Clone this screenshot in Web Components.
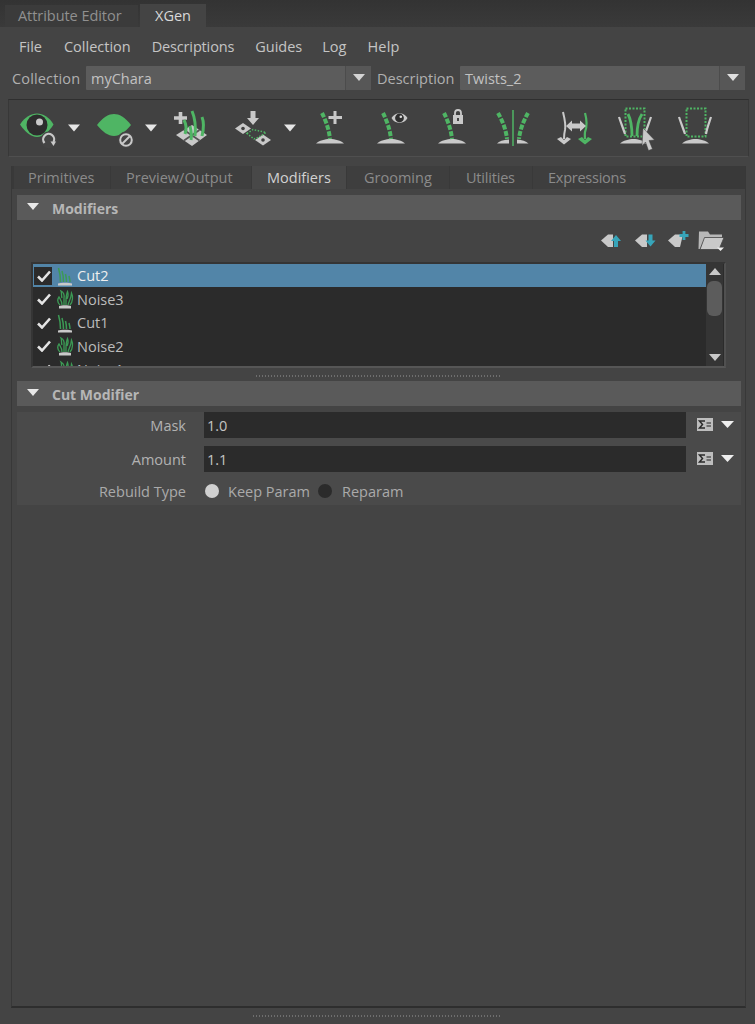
<!DOCTYPE html>
<html><head><meta charset="utf-8"><title>XGen</title>
<style>
html,body{margin:0;padding:0;background:#444;}
body{font-family:"Open Sans","Noto Sans",sans-serif;font-size:14.5px;color:#bdbdbd;}
</style></head>
<body>
<xg-app>
  <xg-topbar></xg-topbar>
  <xg-menubar></xg-menubar>
  <xg-selectors></xg-selectors>
  <xg-toolbar></xg-toolbar>
  <xg-panel>
    <xg-section title="Modifiers">
      <xg-list-tools></xg-list-tools>
      <xg-list></xg-list>
      <xg-splitter width="244" h="13" offset="239"></xg-splitter>
    </xg-section>
    <xg-section title="Cut Modifier" shade>
      <xg-field label="Mask" value="1.0" top="6"></xg-field>
      <xg-field label="Amount" value="1.1" top="8"></xg-field>
      <xg-radio-row></xg-radio-row>
    </xg-section>
  </xg-panel>
  <xg-splitter width="248" h="16" offset="253" tall></xg-splitter>
</xg-app>
<script>
const G='#4fb564', L='#c9c9c9', W='#e6e6e6', T='#37a5ba';
const dome=(a,b)=>`<path d="M${a} 143.500C${a+3} 140.500 ${a+9} 139 ${(a+b)/2} 139S${b-3} 140.500 ${b} 143.500Z" fill="${L}"/>`;
const stem=d=>`<path d="${d}" fill="none" stroke="${G}" stroke-width="4" stroke-dasharray="5 1.500"/>`;
const tri=(a,b)=>`<path d="M${a} 124.500H${b}L${(a+b)/2} 131.500Z" fill="${W}"/>`;
const tile=(x,y)=>`<path d="M${x-8} ${y}L${x} ${y-5.500}L${x+8} ${y}L${x} ${y+5.500}Z" fill="${L}"/><circle cx="${x}" cy="${y}" r="1.800" fill="#3f3f3f"/>`;
const foot=(x,c)=>`<path d="M${x-7} 139L${x-3} 137L${x} 140L${x+3} 137L${x+7} 139L${x} 144.500Z" fill="${c}"/>`;
const TOOL=[
 [9,53,`<path d="M20 124.500C25 117 31 113.500 37 113.500S49 117 53.500 124.500C49 132 43 137 37 137S25 132 20 124.500Z" fill="${G}"/><circle cx="37" cy="125" r="10.500" fill="#2d2d2d"/><circle cx="39.500" cy="122" r="3.500" fill="#c8c8c8"/><circle cx="49" cy="140" r="8.500" fill="#444"/><path d="M44.500 143A5.500 5.500 0 1 1 53.500 142" fill="none" stroke="${L}" stroke-width="2.200"/><path d="M50.500 141.500H56L53.500 146Z" fill="${L}"/>`],
 [62,28,tri(68,80)],
 [90,50,`<path d="M97 125C103 117 109 114 114 114S125 117 131 125C125 132 120 136 114 136S103 132 97 125Z" fill="${G}"/><circle cx="126" cy="140" r="8.500" fill="#444"/><circle cx="126" cy="140" r="5.800" fill="none" stroke="${L}" stroke-width="2"/><path d="M122 144L130 136" stroke="${L}" stroke-width="2"/>`],
 [140,25,tri(145,157)],
 [165,60,`<path d="M180.500 112V124M174 118H187" stroke="${L}" stroke-width="3.600"/><path d="M176 135L192 125L207 135L192 146Z" fill="${L}"/><path d="M184 130L199.500 140.500M199.500 130L184 140.500" stroke="#555" stroke-width="1.800"/><g fill="none" stroke="${G}" stroke-width="3"><path d="M192 111C195 118 196 126 195 136"/><path d="M202 117C204 122 204 128 202 136"/><path d="M184 120C186 124 187 129 185 134"/><path d="M190 126C191 130 192 134 191 140"/></g>`],
 [225,53,`<path d="M250.500 111H255.500V118H259L253 125L247 118H250.500Z" fill="${L}"/>${tile(243,128.500)}${tile(263,140)}<path d="M247 133.500L253 129.500L266 132.500L258 137.500L254 139Z" fill="none" stroke="${G}" stroke-width="1.500" stroke-dasharray="1.500 1.500"/>`],
 [278,27,tri(284,296)],
 [305,60,dome(316,344)+stem('M322 113C325.500 120 329 129 330 139')+`<path d="M335 111V124M328.500 117.500H342" stroke="${L}" stroke-width="3"/>`],
 [365,60,dome(377,405)+stem('M383 113C386.500 120 390 129 391 139')+`<path d="M391.500 118C395 111.500 404 111.500 407.500 118C404 124.500 395 124.500 391.500 118Z" fill="${L}"/><circle cx="399.500" cy="118" r="4.400" fill="#2f2f2f"/><circle cx="400.800" cy="116.800" r="1.300" fill="#ddd"/>`],
 [425,60,dome(438,466)+stem('M444 113C447.500 120 451 129 452 139')+`<path d="M455 115V113A3 3 0 0 1 461 113V115" fill="none" stroke="${L}" stroke-width="1.800"/><rect x="453" y="115" width="10" height="9" fill="${L}"/><rect x="457" y="118" width="2" height="3" fill="#444"/>`],
 [485,60,`<path d="M513 110V146" stroke="${G}" stroke-width="1.500"/><path d="M497 143.500C499 141 503 140 509 139.500V143.500Z" fill="${L}"/><path d="M517 143.500V139.500C522 140 526 141 528.500 143.500Z" fill="${L}"/>`+stem('M498 113C502 120 506 129 507 139')+stem('M528 113C524 120 520 129 519 139')],
 [545,60,`<path d="M563 112C565 120 566 125 565 130C564 134 564 136 564 139" fill="none" stroke="${L}" stroke-width="2"/>${foot(564,L)}<path d="M585 113C587 120 587 127 585 132C584.500 135 585 137 585 139" fill="none" stroke="${G}" stroke-width="2.200"/>${foot(585,G)}<path d="M566 126L572 120.500V123.500H580V120.500L586 126L580 131.500V128.500H572V131.500Z" fill="${L}"/>`],
 [605,63,`<rect x="625.500" y="108.500" width="19" height="28" fill="none" stroke="${G}" stroke-width="2" stroke-dasharray="2 1.500"/><path d="M619 117C621 123 623 128 625 134M651 117C649 123 647 128 645 134" fill="none" stroke="${L}" stroke-width="2.200"/><path d="M628 114C631 120 632 127 632 136M642 114C638 120 637 127 637 136" fill="none" stroke="${G}" stroke-width="2.800"/>${dome(620,647)}<path d="M643 128L654.500 140L649 140.500L652.500 149L648.500 150.500L645.500 142L642 146Z" fill="${L}" stroke="#3c3c3c" stroke-width=".5"/>`],
 [668,62,`<rect x="686.500" y="108.500" width="19" height="28" fill="none" stroke="${G}" stroke-width="2" stroke-dasharray="2 1.500"/><path d="M679 117C681 123 683 128 685 134M711 117C709 123 707 128 706 134" fill="none" stroke="${L}" stroke-width="2.200"/>${dome(682,709)}`]
];
function def(name,css,html){
  customElements.define(name,class extends HTMLElement{
    constructor(){super();const r=this.attachShadow({mode:'open'});
      r.innerHTML=`<style>${css}</style>`+(typeof html==='function'?html(this):html);}
  });
}
def('xg-app',`:host{display:flex;flex-direction:column;width:755px;height:1024px;background:#444;overflow:hidden}`,`<slot></slot>`);
def('xg-topbar',`:host{display:flex;height:27px;background:linear-gradient(#333,#3a3a3a);align-items:flex-end;padding-left:5px;box-sizing:border-box}
 .t{height:22px;display:flex;align-items:center;box-sizing:border-box}
 .a{width:133px;background:#3b3b3b;color:#909090;margin-right:2px;padding-left:13px;letter-spacing:-.05px}
 .b{width:66px;height:23px;background:#444;color:#d8d8d8;justify-content:center}`,
 `<div class="t a">Attribute Editor</div><div class="t b">XGen</div>`);
def('xg-menubar',`:host{display:flex;height:39px;align-items:center;padding:1px 0 0 19px;box-sizing:border-box;color:#c4c4c4}`,
 `<span>File</span><span style="margin-left:22px">Collection</span><span style="margin-left:21px;letter-spacing:-.15px">Descriptions</span><span style="margin-left:21px">Guides</span><span style="margin-left:20px">Log</span><span style="margin-left:21px;letter-spacing:.2px">Help</span>`);
def('xg-selectors',`:host{display:flex;height:24px;padding-left:12px;margin-bottom:9px;color:#b0b0b0}
 .l{display:flex;align-items:center;height:24px;padding-top:1px;box-sizing:border-box}
 .c{display:flex;height:24px;background:#5c5c5c;color:#c2c2c2;align-items:center;border-radius:1px}
 .c span{flex:1;padding:1px 0 0 5px}
 .c i{width:26px;height:24px;background:#575757;border-left:1px solid #4c4c4c;display:flex;align-items:center;justify-content:center;box-sizing:border-box}`,
 `<div class="l" style="width:74px;letter-spacing:.15px">Collection</div><div class="c" style="width:285px"><span>myChara</span><i><svg width="12" height="7"><path d="M0 0H12L6 7Z" fill="#d4d4d4"/></svg></i></div>
 <div class="l" style="width:83px;margin-left:6px">Description</div><div class="c" style="width:285px"><span>Twists_2</span><i><svg width="12" height="7"><path d="M0 0H12L6 7Z" fill="#e0e0e0"/></svg></i></div>`);
def('xg-toolbar',`:host{display:flex;height:58px;width:741px;margin-left:8px;box-sizing:border-box;border:1px solid #4f4f4f;border-top-color:#2f2f2f;border-left-color:#383838;border-right-color:#383838;background:#414141}
 svg{display:block;flex:none}`,
 ()=>TOOL.map(([x,w,b])=>`<svg width="${w}" height="56" viewBox="${x} 100 ${w} 56">${b}</svg>`).join(''));
def('xg-panel',`:host{display:flex;flex-direction:column;margin:9px 0 0 11px;width:735px;height:844px;box-sizing:border-box;border-left:1px solid #383838;border-right:1px solid #383838;border-bottom:2px solid #2e2e2e;background:#444}
 .tabs{display:flex;height:23px;background:#393939;padding-left:2px;gap:1px;flex:none}
 .tabs div{display:flex;align-items:center;box-sizing:border-box;background:#3e3e3e;color:#8b8b8b}
 .tabs .on{background:#484848;color:#d2d2d2}
 .body{padding:6px 4px 0 5px}`,
 `<div class="tabs">
  <div style="width:96px;padding-left:14px">Primitives</div>
  <div style="width:140px;padding-left:15px">Preview/Output</div>
  <div class="on" style="width:94px;padding-left:15px">Modifiers</div>
  <div style="width:102px;padding-left:17px">Grooming</div>
  <div style="width:82px;padding-left:16px;letter-spacing:-.2px">Utilities</div>
  <div style="width:107px;padding-left:15px;letter-spacing:-.25px">Expressions</div>
 </div><div class="body"><slot></slot></div>`);
def('xg-section',`:host{display:block}
 .h{display:flex;align-items:center;height:25px;background:#5a5a5a;font-weight:700;color:#b6b6b6;font-size:14px}
 .h span{padding-top:2px}
 svg{margin:0 13px 0 10px;position:relative;top:-1px}
 :host([shade]) .b{background:#4a4a4a;padding-bottom:2px}`,
 el=>`<div class="h"><svg width="12" height="7"><path d="M0 0H12L6 7Z" fill="#e8e8e8"/></svg><span>${el.getAttribute('title')}</span></div><div class="b"><slot></slot></div>`);
def('xg-list-tools',`:host{display:block;height:42px}svg{display:block}`,
 `<svg width="724" height="42" viewBox="17 220 724 42">
 <path d="M601 240.500L608 234.500H613L613 247H608Z" fill="${L}"/><path d="M616 235L621 241H618V247H614V241H611Z" fill="${T}"/>
 <path d="M635 240.500L642 234.500H647V247H642Z" fill="${L}"/><path d="M650.500 246.500L655.500 240.500H652.500V234.500H648.500V240.500H645.500Z" fill="${T}"/>
 <path d="M668 240.500L675 234.500H683L680 247H675Z" fill="${L}"/><path d="M684 231V240M679.500 235.500H688.500" stroke="${T}" stroke-width="2.800"/>
 <path d="M699 231.500H708L710 234.500H722V240H704L700 249H698.500Z" fill="#b8b8b8"/><path d="M704.500 237.500H724L719 249.500H700Z" fill="${L}" stroke="#444" stroke-width=".8"/><path d="M717 247.500H724L720.500 251Z" fill="#f0f0f0"/>
 </svg>`);
const CUT=`<svg width="18" height="20" viewBox="0 0 18 20"><path d="M2 17.500C4 16.500 14 16.500 16 17.500V19.500H2Z" fill="${L}"/><g fill="none" stroke="#3c9a55" stroke-width="1.500"><path d="M2.500 2C4 7 4.500 11 4.500 16"/><path d="M6 5C7 8 7.500 12 7.500 16"/><path d="M9.500 8C10 10 10.500 13 10.500 16"/><path d="M13 10C13.500 12 14 14 14 16"/></g></svg>`;
const NOISE=`<svg width="18" height="20" viewBox="0 0 18 20"><path d="M3 17C5 16 13 16 15 17V19.500H3Z" fill="${L}"/><g fill="none" stroke="#3c9a55" stroke-width="1.300"><path d="M4 16C1 13 1.500 10 3 8C4 10 6 12 6 16"/><path d="M6 9C5 6 6 4 5 2C7 3 8.500 6 8 9C8 11 8 13 8 16"/><path d="M10 16C10 12 9.500 7 11.500 2.500C12.500 5 12 8 11 10"/><path d="M12 16C13 12 15 10 15.500 4C17 7 17 13 14 16"/></g></svg>`;
const CHECK=`<svg width="14" height="12" viewBox="0 0 14 12"><path d="M1 6.500L5 10.500L13 1.500" fill="none" stroke="#e4e4e4" stroke-width="2.600"/></svg>`;
def('xg-list',`:host{display:block;width:695px;height:106px;margin-left:14px;box-sizing:border-box;border:2px solid #353535;border-right-color:#505050;border-bottom-color:#565656;background:#2b2b2b;overflow:hidden;position:relative;color:#bcbcbc}
 .r{display:flex;align-items:center;height:23.500px;width:674px;padding-left:1px;box-sizing:border-box}
 .r.s{background:#5285a8;color:#eee}
 .c{width:18px;height:18px;display:flex;align-items:center;justify-content:center;margin-right:4px;flex:none;padding-left:1px;box-sizing:border-box}
 .s .c{background:#2b2b2b}
 .i{width:20px;height:20px;margin-right:1px;display:flex;flex:none}
 .bar{position:absolute;right:1px;top:0;bottom:0;width:17px;background:#353535}
 .bar svg{position:absolute;left:3px}
 .th{position:absolute;left:1px;width:15px;top:17px;height:35px;background:#5c5c5c;border-radius:6px}`,
 `<div class="r s"><div class="c">${CHECK}</div><div class="i">${CUT}</div><span>Cut2</span></div>
 <div class="r"><div class="c">${CHECK}</div><div class="i">${NOISE}</div><span>Noise3</span></div>
 <div class="r"><div class="c">${CHECK}</div><div class="i">${CUT}</div><span>Cut1</span></div>
 <div class="r"><div class="c">${CHECK}</div><div class="i">${NOISE}</div><span>Noise2</span></div>
 <div class="r"><div class="c">${CHECK}</div><div class="i">${NOISE}</div><span>Noise1</span></div>
 <div class="bar"><svg style="top:4px" width="12" height="7"><path d="M6 0L12 7H0Z" fill="#c8c8c8"/></svg><div class="th"></div><svg style="bottom:5px" width="12" height="7"><path d="M0 0H12L6 7Z" fill="#c8c8c8"/></svg></div>`);
def('xg-splitter',`:host{display:block;box-sizing:border-box}
 div{background-image:repeating-linear-gradient(90deg,#6e6e6e 0 1px,transparent 1px 3px);height:2px}`,
 el=>{const h=el.getAttribute('h'),o=el.getAttribute('offset'),w=el.getAttribute('width');
  el.style.height=h+'px';
  el.style.paddingLeft=o+'px';
  el.style.paddingTop='7px';
  return `<div style="width:${w}px"></div>`;});
def('xg-field',`:host{display:flex;height:26px;align-items:center;color:#b2b2b2}
 .l{width:169px;text-align:right;margin-right:18px;padding-top:2px}
 .v{width:482px;height:26px;background:#2b2b2b;color:#c4c4c4;display:flex;align-items:center;padding:2px 0 0 3px;box-sizing:border-box;margin-right:11px}
 .s{display:block;margin-right:8px}`,
 el=>{el.style.marginTop=el.getAttribute('top')+'px';return `<div class="l">${el.getAttribute('label')}</div><div class="v">${el.getAttribute('value')}</div>
 <svg class="s" width="16" height="13" viewBox="0 0 16 13"><rect width="16" height="13" fill="#bdbdbd"/><path d="M8 3H2.500L5.500 6.500L2.500 10H8" fill="none" stroke="#2b2b2b" stroke-width="1.500"/><path d="M9.500 5H14M9.500 8H14" stroke="#555" stroke-width="1.500"/></svg>
 <svg width="13" height="7"><path d="M0 0H13L6.500 7Z" fill="#eee"/></svg>`;});
def('xg-radio-row',`:host{display:flex;align-items:center;height:22px;margin-top:9px;color:#aaa}
 .l{width:169px;text-align:right;margin-right:19px}
 i{width:14px;height:14px;border-radius:50%;display:block;margin-right:9px;position:relative;top:-1px}`,
 `<div class="l">Rebuild Type</div><i style="background:#d0d0d0"></i><span style="width:90px">Keep Param</span><i style="background:#2b2b2b;margin-right:10px"></i><span>Reparam</span>`);
</script>
</body></html>
